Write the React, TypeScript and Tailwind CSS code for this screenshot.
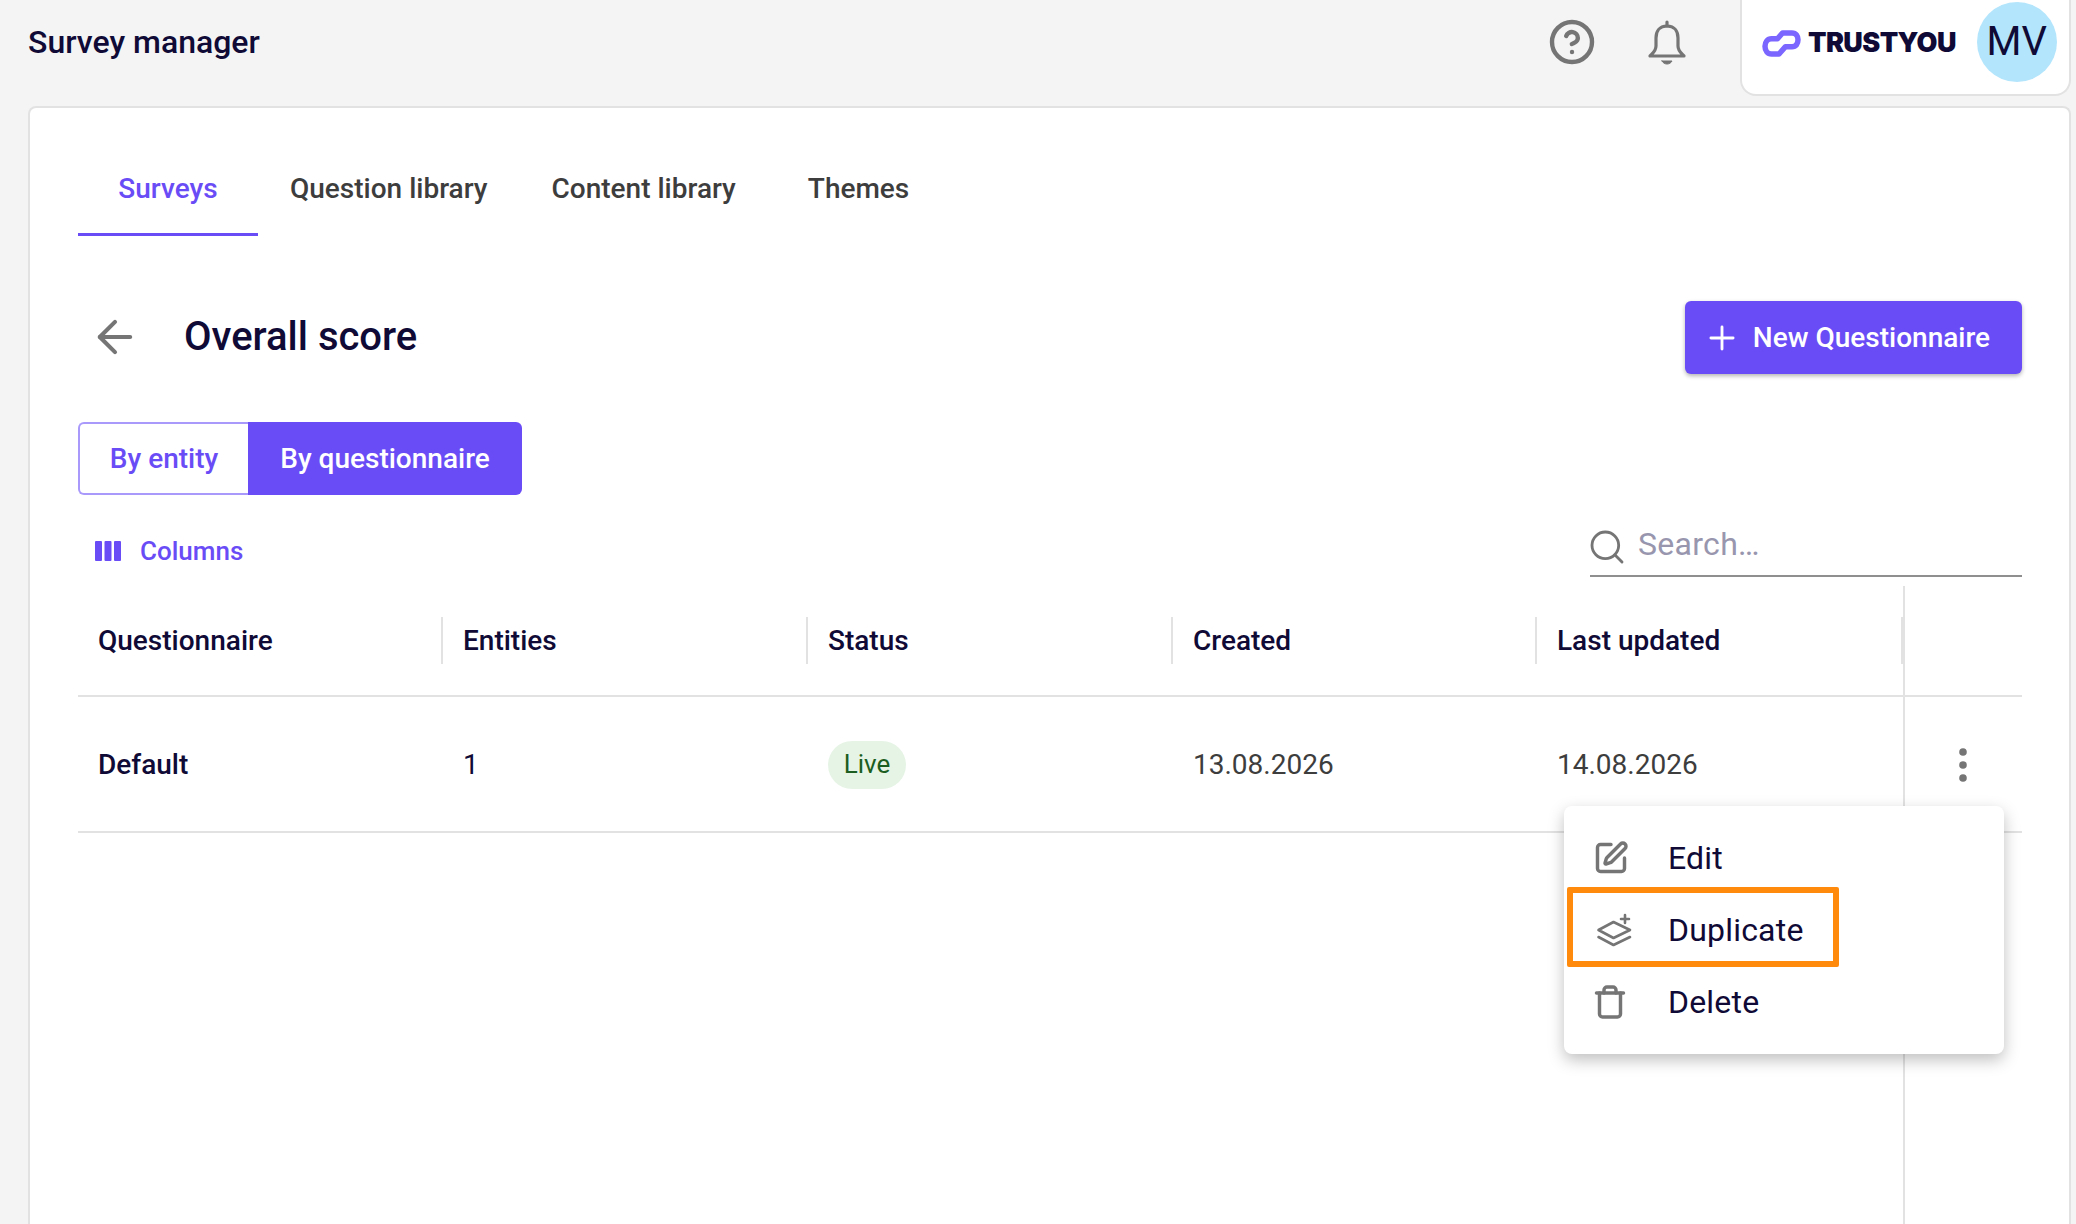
import React from "react";
import { ArrowLeft, CircleHelp, Plus, Search, SquarePen, Trash } from "lucide-react";

const columns = ["Questionnaire", "Entities", "Status", "Created", "Last updated"];

const TrustYouLogo = () => (
  <div className="flex items-center gap-[7px]">
    <svg width="39" height="27" viewBox="0 0 39 27" fill="none" stroke="#7b66ff" strokeWidth="5.500" strokeLinejoin="round">
      <path d="M20.500 3 H30 C34 3 36 6 36 9.800 C36 13.600 34 16.700 30 16.700 H23.500 L17 24 H9.500 C5.500 24 3 20.500 3 16.300 C3 12 5.500 8.700 9.500 8.700 H15.500 Z" />
    </svg>
    <span className="font-['Inter',sans-serif] text-[27px] font-black tracking-[-0.6px] text-[#0f0a36]">TRUSTYOU</span>
  </div>
);

const BellIcon = () => (
  <svg width="48" height="48" viewBox="0 0 48 48" fill="none" stroke="#757575" strokeWidth="3.200" strokeLinejoin="round" strokeLinecap="round">
    <path d="M24 4 V8" />
    <path d="M24 8 C16 8 13 14 13 20 V28 C13 33 10 35 7 38 H41 C38 35 35 33 35 28 V20 C35 14 32 8 24 8 Z" />
    <path d="M19 43 H29 C28 45 26 46 24 46 C22 46 20 45 19 43 Z" fill="#757575" strokeWidth="1" />
  </svg>
);

const DuplicateIcon = () => (
  <svg width="36" height="36" viewBox="0 0 36 36" fill="none" stroke="#757575" strokeWidth="2.600" strokeLinejoin="round" strokeLinecap="round" className="ml-[2px]">
    <path d="M2.500 18 L17.500 10 L34 18 L17.500 26 Z" />
    <path d="M2.500 25 L17.500 33 L34 25" />
    <path d="M29 3 V11 M25 7 H33" />
  </svg>
);

const ColumnsIcon = () => (
  <svg width="26" height="20" viewBox="0 0 26 20" fill="#6a4cf6" className="ml-[1px] mr-[-1px]">
    <rect x="0" y="0" width="7" height="20" rx="1" />
    <rect x="9.500" y="0" width="7" height="20" rx="1" />
    <rect x="19" y="0" width="7" height="20" rx="1" />
  </svg>
);

const KebabIcon = () => (
  <svg width="12" height="36" viewBox="0 0 12 36" fill="#757575">
    <circle cx="6" cy="5" r="3.800" />
    <circle cx="6" cy="18" r="3.800" />
    <circle cx="6" cy="31" r="3.800" />
  </svg>
);

export default function App() {
  return (
    <div className="h-[1224px] w-[2076px] overflow-hidden bg-[#f4f4f4] font-['Roboto',sans-serif] text-[#0f0a36]">
      {/* Top bar */}
      <header className="flex h-[106px] items-start justify-between pl-[28px] pr-[5px]">
        <h1 className="mt-[22px] text-[32px] leading-[40px] font-medium">Survey manager</h1>
        <div className="flex items-start">
          <CircleHelp className="mt-[18px] mr-[47px] h-[48px] w-[48px] text-[#757575]" strokeWidth={2.200} />
          <div className="mt-[18px] mr-[49px]">
            <BellIcon />
          </div>
          <div className="flex h-[96px] w-[331px] items-start rounded-b-[16px] border-2 border-t-0 border-[#e2e2e2] bg-white pl-[20px]">
            <div className="mt-[23px]">
              <TrustYouLogo />
            </div>
            <div className="mt-[2px] ml-[21px] flex h-[80px] w-[80px] items-center justify-center rounded-full bg-[#b3e5fc] text-[40px]">MV</div>
          </div>
        </div>
      </header>

      {/* Main card */}
      <main className="relative ml-[28px] h-[1118px] w-[2043px] rounded-t-[8px] border-2 border-b-0 border-[#e2e2e2] bg-white pr-[47px] pl-[48px]">
        <nav className="flex h-[128px] items-end border-[#e2e2e2] text-[28px] leading-[32px] font-medium text-[#3d3d3d]">
          <div className="w-[180px] border-b-[3px] border-[#6a4cf6] pb-[28px] text-center text-[#6a4cf6]">Surveys</div>
          <div className="ml-[32px] pb-[31px]">Question library</div>
          <div className="ml-[64px] pb-[31px]">Content library</div>
          <div className="ml-[72px] pb-[31px]">Themes</div>
        </nav>

        <div className="mt-[64px] flex h-[74px] items-center justify-between">
          <div className="flex items-center">
            <ArrowLeft className="ml-[11px] h-[52px] w-[52px] text-[#757575]" strokeWidth={1.900} />
            <h2 className="ml-[43px] text-[40px] font-medium">Overall score</h2>
          </div>
          <button className="flex h-[73px] w-[337px] items-center justify-center gap-[12px] rounded-[6px] bg-[#6a4cf6] pt-[1px] pr-[14px] text-[28px] font-medium text-white shadow-[0_2px_4px_rgba(0,0,0,0.3)]">
            <Plus className="h-[38px] w-[38px]" strokeWidth={1.800} />
            New Questionnaire
          </button>
        </div>

        <div className="mt-[48px] flex h-[73px] w-[444px] text-[28px] font-medium">
          <div className="flex w-[170px] items-center justify-center rounded-l-[6px] border-2 border-r-0 border-[#a999fb] text-[#6a4cf6]">By entity</div>
          <div className="flex flex-1 items-center justify-center rounded-r-[6px] bg-[#6a4cf6] text-white">By questionnaire</div>
        </div>

        <div className="mt-[25px] flex h-[85px] justify-between">
          <div className="mt-[11px] flex h-[40px] items-center gap-[20px] pl-[16px] text-[26px] font-medium text-[#6a4cf6]">
            <ColumnsIcon />
            Columns
          </div>
          <div className="flex h-[57px] w-[432px] items-center gap-[11px] border-b-2 border-[#8f8f8f] pb-[6px]">
            <Search className="mt-[5px] ml-[-3px] h-[40px] w-[40px] text-[#757575]" strokeWidth={1.700} />
            <span className="mb-[2px] text-[32px] leading-[40px] tracking-[0.3px] text-[#9896ae]">Search…</span>
          </div>
        </div>

        {/* Table */}
        <div className="mt-[-19px]">
          <div className="grid h-[111px] grid-cols-[365px_365px_365px_364px_366px_1fr] items-center border-b-2 border-[#e2e2e2] text-[28px] font-medium">
            {columns.map((c) => (
              <div key={c} className="flex h-[47px] items-center border-r-2 border-[#e2e2e2] pl-[20px]">{c}</div>
            ))}
          </div>
          <div className="grid h-[136px] grid-cols-[365px_365px_365px_364px_366px_1fr] items-center border-b-2 border-[#e2e2e2] pt-[1px] text-[28px] text-[#3d3d3d]">
            <div className="pl-[20px] font-medium text-[#0f0a36]">Default</div>
            <div className="pl-[20px] text-[#0f0a36]">1</div>
            <div className="pl-[20px]">
              <span className="inline-flex h-[48px] w-[78px] items-center justify-center rounded-full bg-[#e6f4e6] text-[26px] text-[#1b5e20]">Live</span>
            </div>
            <div className="pl-[20px]">13.08.2026</div>
            <div className="pl-[20px]">14.08.2026</div>
            <div className="flex justify-center">
              <KebabIcon />
            </div>
          </div>
        </div>

        {/* Sticky column line */}
        <div className="absolute top-[478px] bottom-0 left-[1873px] w-[2px] bg-[#e2e2e2]" />

        {/* Row menu */}
        <div className="absolute top-[698px] left-[1534px] h-[248px] w-[440px] rounded-[8px] bg-white py-[16px] pl-[30px] text-[32px] tracking-[0.2px] shadow-[0_6px_16px_rgba(0,0,0,0.25)]">
          <div className="flex h-[72px] items-center gap-[38px]">
            <SquarePen className="mr-[1px] ml-[-1px] h-[36px] w-[36px] text-[#757575]" strokeWidth={2.300} />
            <span>Edit</span>
          </div>
          <div className="flex h-[72px] items-center gap-[36px]">
            <DuplicateIcon />
            <span>Duplicate</span>
          </div>
          <div className="flex h-[72px] items-center gap-[38px]">
            <Trash className="mr-[2px] ml-[-2px] h-[36px] w-[36px] text-[#757575]" strokeWidth={2.300} />
            <span>Delete</span>
          </div>
          {/* Annotation box */}
          <div className="absolute top-[81px] left-[3px] h-[80px] w-[272px] rounded-[2px] border-[6px] border-[#ff8a0c]" />
        </div>
      </main>
    </div>
  );
}
